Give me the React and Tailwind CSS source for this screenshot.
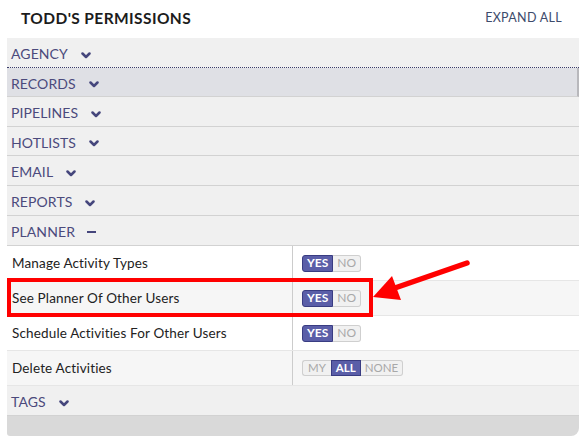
import React from "react";

const sections = [
  { name: "AGENCY", dotted: true, h: "h-[30px]" },
  { name: "RECORDS", active: true, h: "h-[29px]" },
  { name: "PIPELINES", h: "h-[30px]" },
  { name: "HOTLISTS", h: "h-[29px]" },
  { name: "EMAIL", h: "h-[30px]" },
  { name: "REPORTS", h: "h-[30px]" },
];

const plannerRows = [
  { label: "Manage Activity Types", type: "yesno" },
  { label: "See Planner Of Other Users", type: "yesno", shaded: true },
  { label: "Schedule Activities For Other Users", type: "yesno" },
  { label: "Delete Activities", type: "scope", shaded: true },
];

const Chevron = () => (
  <svg width="10" height="7" viewBox="0 0 10 7" className="ml-[13px] mt-[3px]">
    <path d="M1.5 1.5 L5 5 L8.5 1.5" fill="none" stroke="#45467c" strokeWidth="2.5" strokeLinecap="round" strokeLinejoin="round" />
  </svg>
);

const SectionRow = ({ name, dotted, active, open, h = "h-[30px]" }) => (
  <div
    className={`flex items-center ${h} pl-[4px] pt-[2px] border-b ${
      dotted ? "border-dotted border-[#3b3d6b]" : "border-[#d2d2d2]"
    } ${active ? "bg-[#dfe0e5] border-r-2 border-r-[#b8b8bc]" : "bg-[#f0f0f0]"}`}
  >
    <span className="text-[14px] text-[#4b4a7c] tracking-[0.1px]">{name}</span>
    {open ? (
      <span className="ml-[12px] mt-[1px] w-[9px] h-[2px] bg-[#45467c]" />
    ) : (
      <Chevron />
    )}
  </div>
);

const YesNo = () => (
  <div className="flex h-[17px] text-[12px] leading-none">
    <span className="flex items-center px-[4px] bg-[#5a5ea8] border border-[#393c82] rounded-l-[3px] text-white font-bold">
      YES
    </span>
    <span className="flex items-center px-[4px] bg-[#f1f1f1] border border-l-0 border-[#cfcfcf] rounded-r-[3px] text-[#a8a8a8]">
      NO
    </span>
  </div>
);

const Scope = () => (
  <div className="flex h-[16px] text-[11.5px] leading-none">
    <span className="flex items-center px-[5px] bg-[#f1f1f1] border border-r-0 border-[#cfcfcf] rounded-l-[3px] text-[#a8a8a8]">
      MY
    </span>
    <span className="flex items-center px-[4px] bg-[#5a5ea8] border border-[#393c82] text-white font-bold">
      ALL
    </span>
    <span className="flex items-center px-[4px] bg-[#f1f1f1] border border-l-0 border-[#cfcfcf] rounded-r-[3px] text-[#a8a8a8]">
      NONE
    </span>
  </div>
);

export default function App() {
  return (
    <div className="relative w-[586px] h-[436px] bg-white overflow-hidden font-['Lato','Liberation_Sans',sans-serif]">
      {/* Header */}
      <div className="flex items-center justify-between h-[38px] pl-[21px] pr-[24px] pb-[1px]">
        <h1 className="text-[15.5px] font-bold text-[#1c1c1c] tracking-[0.4px]">TODD'S PERMISSIONS</h1>
        <span className="text-[12.5px] text-[#3d4b6b] tracking-[0.3px]">EXPAND ALL</span>
      </div>

      <div className="mx-[7px]">
        {sections.map((s) => (
          <SectionRow key={s.name} {...s} />
        ))}
        <SectionRow name="PLANNER" open />

        {plannerRows.map((row) => (
          <div
            key={row.label}
            className={`grid grid-cols-[286px_1fr] h-[35px] border-b border-[#e6e6e6] ${
              row.shaded ? "bg-[#f6f6f6]" : "bg-white"
            }`}
          >
            <div className="flex items-center pl-[5px] border-r border-[#cccccc] text-[13.5px] text-[#222] tracking-[0.15px]">
              {row.label}
            </div>
            <div className="flex items-center pl-[9px]">
              {row.type === "yesno" ? <YesNo /> : <Scope />}
            </div>
          </div>
        ))}

        <SectionRow name="TAGS" />
        <div className="h-[20px] bg-[#d9d9d9] rounded-br-[8px] rounded-bl-[3px]" />
      </div>

      {/* Annotation: highlight box */}
      <div className="absolute left-[7px] top-[278px] w-[366px] h-[39px] border-[4px] border-[#ff0000]" />

      {/* Annotation: arrow */}
      <svg className="absolute left-0 top-0" width="586" height="436" viewBox="0 0 586 436">
        <line x1="467" y1="263" x2="392" y2="289" stroke="#ff0000" strokeWidth="5.5" strokeLinecap="round" />
        <polygon points="373,297 392,276 401,300" fill="#ff0000" />
      </svg>
    </div>
  );
}
